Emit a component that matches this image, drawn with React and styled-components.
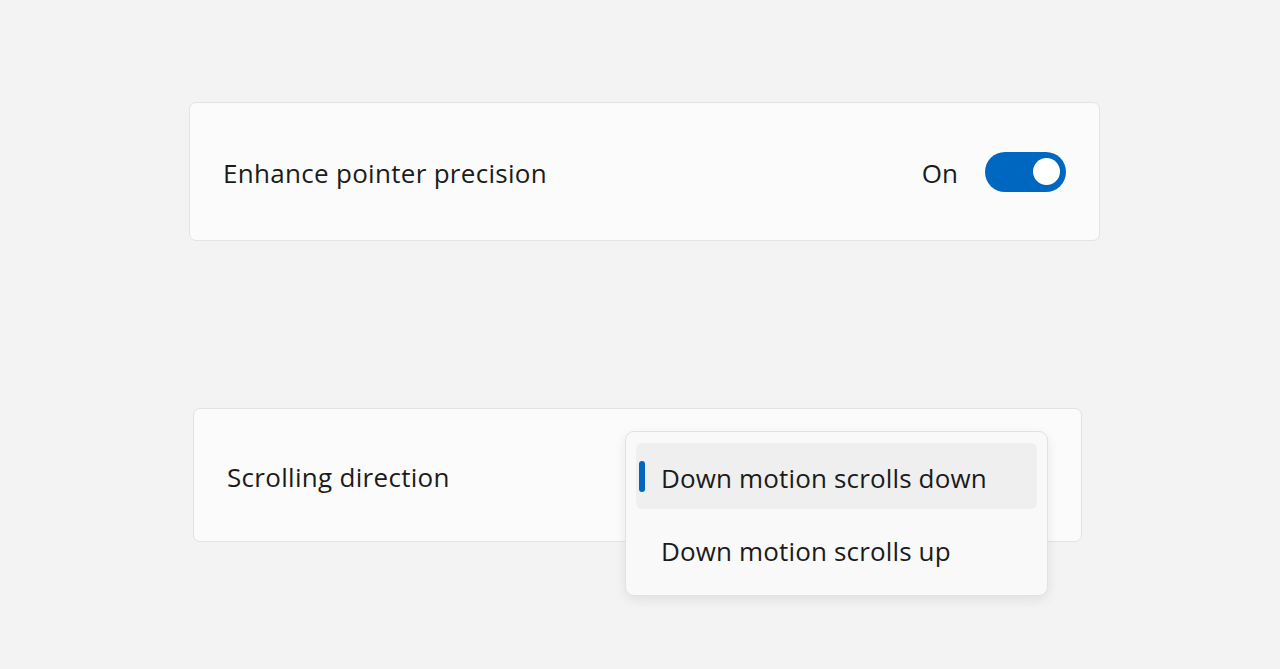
import React from 'react';
import styled, { createGlobalStyle } from 'styled-components';

const GlobalStyle = createGlobalStyle`
  html, body {
    margin: 0;
    padding: 0;
    background: #f3f3f3;
  }
  body {
    font-family: "Open Sans", "Noto Sans", sans-serif;
    color: #1b1b1b;
  }
`;

function Toggle(props) {
  const { on } = props;
  return (
    <Track on={on ? 1 : 0}>
      <Knob />
    </Track>
  );
}

function App() {
  const options = ['Down motion scrolls down', 'Down motion scrolls up'];
  return (
    <Page>
      <GlobalStyle />
      <Card left={189} width={911} height={139}>
        <Label>Enhance pointer precision</Label>
        <Controls>
          <State>On</State>
          <Toggle on />
        </Controls>
      </Card>
      <Card left={193} width={889} height={134} top={167}>
        <Label>Scrolling direction</Label>
        <Menu>
          {options.map((opt, i) => (
            <Option key={opt} selected={i === 0}>
              {i === 0 && <Accent />}
              {opt}
            </Option>
          ))}
        </Menu>
      </Card>
    </Page>
  );
}

const Page = styled.div`
  width: 1280px;
  height: 669px;
  padding-top: 102px;
  box-sizing: border-box;
  display: flex;
  flex-direction: column;
  overflow: hidden;
`;

const Card = styled.div`
  position: relative;
  margin-left: ${props => props.left}px;
  margin-top: ${props => props.top || 0}px;
  width: ${props => props.width}px;
  height: ${props => props.height}px;
  box-sizing: border-box;
  background: #fbfbfb;
  border: 1.5px solid #e3e3e3;
  border-radius: 7px;
  display: flex;
  align-items: center;
  justify-content: space-between;
  padding: 0 33px 0 33px;
`;

const Label = styled.span`
  font-size: 26px;
  letter-spacing: 0.3px;
  padding-top: 3px;
`;

const Controls = styled.div`
  display: flex;
  align-items: center;
  gap: 27px;
`;

const State = styled.span`
  font-size: 26px;
  padding-top: 3px;
`;

const Track = styled.div`
  width: 81px;
  height: 40px;
  border-radius: 20px;
  background: ${props => (props.on ? '#0067c0' : '#ffffff')};
  display: flex;
  align-items: center;
  justify-content: ${props => (props.on ? 'flex-end' : 'flex-start')};
  padding: 0 6px;
  box-sizing: border-box;
`;

const Knob = styled.div`
  width: 27px;
  height: 27px;
  border-radius: 50%;
  background: #ffffff;
`;

const Menu = styled.div`
  position: absolute;
  left: 431px;
  top: 22px;
  width: 423px;
  box-sizing: border-box;
  background: #f9f9f9;
  border: 1.5px solid #e2e2e2;
  border-radius: 9px;
  box-shadow: 0 4px 12px rgba(0, 0, 0, 0.08);
  padding: 11px 10px 13px 10px;
  display: flex;
  flex-direction: column;
  gap: 7px;
`;

const Option = styled.div`
  position: relative;
  height: 66px;
  display: flex;
  align-items: center;
  padding: 3px 0 0 25px;
  box-sizing: border-box;
  border-radius: 6px;
  background: ${props => (props.selected ? '#efefef' : 'transparent')};
  font-size: 26px;
  letter-spacing: 0.15px;
`;

const Accent = styled.span`
  position: absolute;
  left: 3px;
  top: 18px;
  width: 6px;
  height: 31px;
  border-radius: 3px;
  background: #0067c0;
`;

export default App;
